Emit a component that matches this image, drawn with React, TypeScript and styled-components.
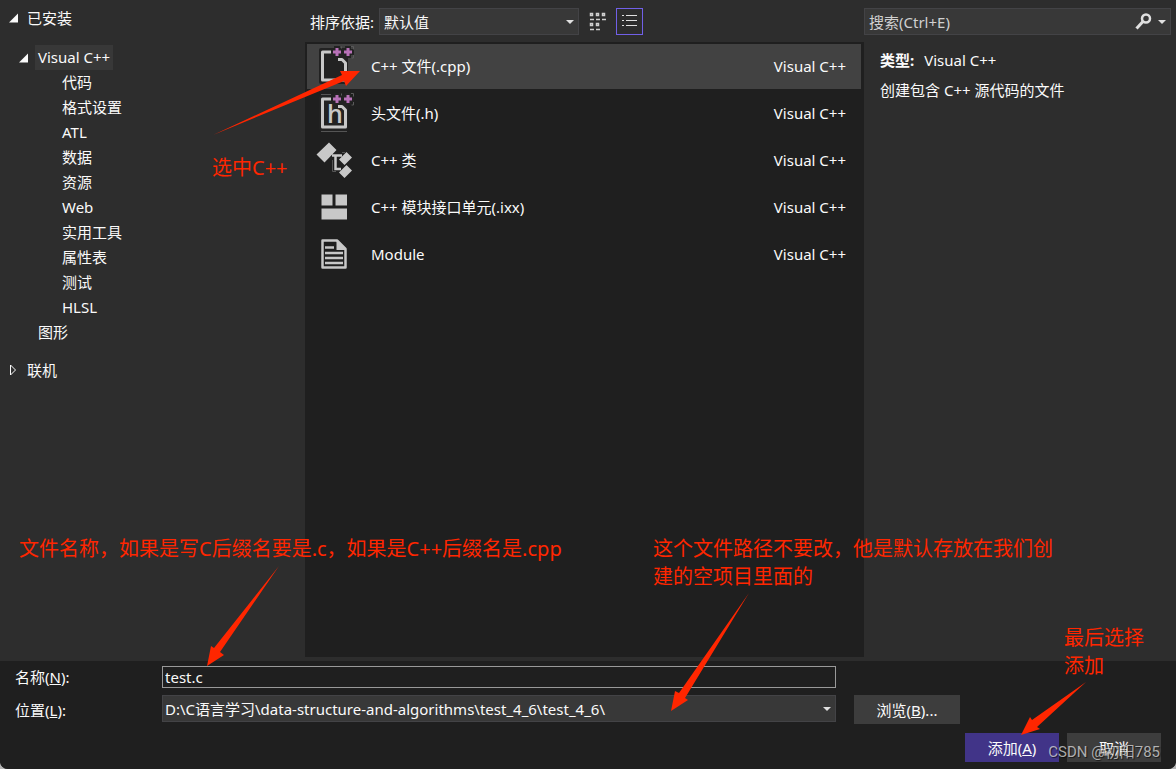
import React, { useState } from "react";
import styled, { createGlobalStyle, css } from "styled-components";

const sans = `"Noto Sans", "Noto Sans CJK SC", sans-serif`;

const GlobalStyle = createGlobalStyle`
  * { box-sizing: border-box; }
  body { margin: 0; background: #b4b4b4; }
  button, input, select { font: inherit; color: inherit; }
`;

const Dialog = styled.form`
  position: relative;
  display: flex;
  flex-direction: column;
  min-height: 100vh;
  overflow: hidden;
  border-radius: 0 0 8px 8px;
  background: #2d2d2d;
  color: #fafafa;
  font: 15px/24px ${sans};
`;

const Main = styled.div`
  flex: 1;
  display: grid;
  grid-template-columns: 305px minmax(0, 1fr) 312px;
`;

const Sidebar = styled.nav`
  padding: 5px 8px;
`;

const TreeHeading = styled.div`
  display: flex;
  align-items: center;
  gap: 8px;
  height: 25px;
`;

const TreeList = styled.ul`
  list-style: none;
  margin: 0;
  padding: 0;
`;

const Branch = styled(TreeList)`
  padding: 15px 0 12px 10px;
`;

const TreeRow = styled.li<{ $indent?: number }>`
  display: flex;
  align-items: center;
  gap: 6px;
  height: 25px;
  padding-left: ${(p) => p.$indent ?? 0}px;
`;

const TreeLabel = styled.span<{ $selected?: boolean }>`
  line-height: 25px;
  ${(p) =>
    p.$selected &&
    css`
      padding: 0 3px;
      background: #383838;
    `}
`;

const Center = styled.section`
  display: flex;
  flex-direction: column;
  padding-bottom: 4px;
`;

const Toolbar = styled.div`
  display: flex;
  align-items: center;
  height: 42px;
  padding: 1px 0 0 5px;
`;

const ToolbarLabel = styled.label`
  width: 69px;
  white-space: nowrap;
`;

const SelectBox = styled.div<{ $width?: string }>`
  position: relative;
  width: ${(p) => p.$width ?? "100%"};
  height: 27px;
`;

const Select = styled.select`
  appearance: none;
  display: block;
  width: 100%;
  height: 27px;
  padding: 0 20px 0 4px;
  border: 1px solid #434346;
  border-radius: 0;
  background: #383838;
  outline: none;
`;

const Location = styled(Select)`
  padding-left: 2px;
`;

const SelectArrow = styled.svg`
  position: absolute;
  right: 5px;
  top: 12px;
  pointer-events: none;
`;

const IconButton = styled.button<{ $active?: boolean }>`
  display: grid;
  place-items: center;
  width: 27px;
  height: 27px;
  margin-left: 5px;
  padding: 0;
  border: 1px solid ${(p) => (p.$active ? "#7160e8" : "transparent")};
  background: transparent;
`;

const TemplateList = styled.div`
  flex: 1;
  display: flex;
  flex-direction: column;
  gap: 2px;
  padding: 2px 3px 2px 2px;
  background: #1f1f1f;
`;

const Template = styled.button<{ $selected: boolean }>`
  display: flex;
  align-items: flex-start;
  height: 45px;
  padding: 0 15px 0 9px;
  border: 0;
  text-align: left;
  line-height: 44px;
  background: ${(p) => (p.$selected ? "#424242" : "transparent")};
`;

const TemplateName = styled.span`
  flex: 1;
  padding-left: 15px;
`;

const Details = styled.aside`
  padding-right: 5px;
`;

const SearchBox = styled.div`
  display: flex;
  align-items: center;
  gap: 6px;
  height: 27px;
  margin: 8px 0 13px;
  padding: 0 4px;
  border: 1px solid #434346;
  background: #383838;
`;

const SearchInput = styled.input`
  flex: 1;
  min-width: 0;
  padding: 0;
  border: 0;
  outline: none;
  background: transparent;
  &::placeholder { color: #d0d0d0; opacity: 1; }
`;

const DetailText = styled.p`
  margin: 0 0 6px;
  padding-left: 16px;
`;

const DetailKey = styled.strong`
  margin-right: 10px;
`;

const Footer = styled.footer`
  background: #1f1f1f;
  padding: 5px 15px 7px;
`;

const Fields = styled.div`
  display: grid;
  grid-template-columns: 147px minmax(0, 1fr) 106px;
  grid-template-rows: 22px 29px;
  row-gap: 7px;
  padding-right: 201px;
`;

const FieldLabel = styled.label`
  align-self: center;
`;

const NameInput = styled.input`
  height: 22px;
  padding: 0 2px;
  border: 1px solid #999;
  border-radius: 0;
  outline: none;
  background: #1f1f1f;
`;

const PushButton = styled.button<{ $primary?: boolean }>`
  height: 29px;
  min-width: 94px;
  padding: 0;
  border: 1px solid ${(p) => (p.$primary ? "#413488" : "#3d3d3d")};
  background: ${(p) => (p.$primary ? "#413488" : "#3d3d3d")};
`;

const BrowseButton = styled(PushButton)`
  grid-column: 3;
`;

const LocationCell = styled.div`
  padding-right: 18px;
`;

const NameCell = styled(LocationCell)`
  display: grid;
`;

const Actions = styled.div`
  display: flex;
  justify-content: flex-end;
  gap: 8px;
  margin-top: 9px;
`;

const Overlay = styled.div`
  position: absolute;
  inset: 0;
  pointer-events: none;
`;

const Arrows = styled.svg`
  position: absolute;
  left: 0;
  top: 0;
`;

const Note = styled.div<{ $x: number; $y: number }>`
  position: absolute;
  left: ${(p) => p.$x}px;
  top: ${(p) => p.$y}px;
  color: #ff2600;
  font-size: 20px;
  line-height: 28px;
  white-space: nowrap;
`;

const Watermark = styled.div`
  position: absolute;
  right: 16px;
  bottom: 7px;
  color: rgba(220, 220, 220, 0.75);
  font: 15px/20px Roboto, "Noto Sans CJK SC", sans-serif;
  text-shadow: 1px 1px 1px rgba(0, 0, 0, 0.6);
`;

const Expanded = () => (
  <svg width="11" height="10" viewBox="0 0 11 10">
    <path d="M10 0.5V9.5H1z" fill="#fafafa" />
  </svg>
);

const Collapsed = () => (
  <svg width="11" height="12" viewBox="0 0 11 12">
    <path d="M2.5 1V11L7.5 6z" fill="none" stroke="#fafafa" />
  </svg>
);

const Down = () => <path d="M0 0H8L4 4z" fill="#e0e0e0" />;

const PlusPlus = () => (
  <>
    <path d="M15 8h12M26 8h12M21 2v12M32 2v12" stroke="#222" strokeWidth="6" />
    <path d="M17 8h8M28 8h8M21 4v8M32 4v8" stroke="#b871b8" strokeWidth="3" />
    <path d="M25.500 2.500v2M35 2.500h2.500v3M37.500 11v3h-2" fill="none" stroke="#5a5a5a" />
  </>
);

const FileFrame = () => (
  <>
    <rect x="3" y="4" width="29" height="36" rx="2" fill="#222" />
    <path d="M16 8H6.500V36H29.500V19L26 15.500H22" fill="none" stroke="#c8c8c8" strokeWidth="3" strokeLinejoin="round" />
    <PlusPlus />
  </>
);

const icons: Record<string, React.ReactNode> = {
  cpp: <FileFrame />,
  header: (
    <>
      <path d="M5 40.500H31M5 3.500H15" stroke="#555" />
      <FileFrame />
      <text x="11" y="32" fontSize="25" fontWeight="600" fontFamily="Open Sans, sans-serif" fill="#c8c8c8">h</text>
    </>
  ),
  klass: (
    <>
      <path d="M16 17.500H26M19.500 17V31H25" fill="none" stroke="#c8c8c8" strokeWidth="2.500" />
      <path d="M16.500 22V33.500H20M26 14.500h3" fill="none" stroke="#555" />
      <path d="M13 4.500L20.500 12L8.500 24.500L0.500 16.500z M30.500 14L36 19.500L28.500 27L23 21.500z M30.500 27L36 32.500L28.500 40L23 34.500z" fill="#c8c8c8" />
    </>
  ),
  ixx: <path d="M5.500 9.500h11v11h-11zM19.500 9.500h11.500v11h-11.500zM5.500 23.500h25.500v11h-25.500z" fill="#c8c8c8" />,
  module: (
    <>
      <path d="M6.500 8.500H21L29.500 17V35.500H6.500z" fill="#1f1f1f" stroke="#c8c8c8" strokeWidth="2.500" strokeLinejoin="round" />
      <path d="M20.500 8V18H30z" fill="#c8c8c8" />
      <path d="M9 15.500h9M9 21h18M9 26h18M9 31h18" stroke="#c8c8c8" strokeWidth="2.500" />
    </>
  ),
};

const templates = [
  { icon: "cpp", name: "C++ 文件(.cpp)" },
  { icon: "header", name: "头文件(.h)" },
  { icon: "klass", name: "C++ 类" },
  { icon: "ixx", name: "C++ 模块接口单元(.ixx)" },
  { icon: "module", name: "Module" },
];

const categories = ["代码", "格式设置", "ATL", "数据", "资源", "Web", "实用工具", "属性表", "测试", "HLSL"];

export default function App() {
  const [selected, setSelected] = useState(0);

  return (
    <Dialog onSubmit={(e) => e.preventDefault()}>
      <GlobalStyle />
      <Main>
        <Sidebar>
          <TreeHeading>
            <Expanded />
            已安装
          </TreeHeading>
          <Branch>
            <TreeRow>
              <Expanded />
              <TreeLabel $selected>Visual C++</TreeLabel>
            </TreeRow>
            {categories.map((c) => (
              <TreeRow key={c} $indent={44}>
                <TreeLabel>{c}</TreeLabel>
              </TreeRow>
            ))}
            <TreeRow $indent={20}>
              <TreeLabel>图形</TreeLabel>
            </TreeRow>
          </Branch>
          <TreeHeading>
            <Collapsed />
            联机
          </TreeHeading>
        </Sidebar>

        <Center>
          <Toolbar>
            <ToolbarLabel htmlFor="sort">排序依据:</ToolbarLabel>
            <SelectBox $width="200px">
              <Select id="sort">
                <option>默认值</option>
              </Select>
              <SelectArrow width="8" height="5">
                <Down />
              </SelectArrow>
            </SelectBox>
            <IconButton type="button" aria-label="中等图标">
              <svg width="18" height="20" viewBox="0 0 18 20">
                <g fill="none" stroke="#d0d0d0" strokeWidth="1.500">
                  <path d="M1.500 1.500h2v2h-2zM7.500 1.500h2v2h-2zM13.500 1.500h2v2h-2zM1.500 11.500h2v2h-2zM7.500 11.500h2v2h-2z" />
                  <path d="M1 7.500h4M7 7.500h4M13 7.500h4M1 17.500h4M7 17.500h4" />
                </g>
              </svg>
            </IconButton>
            <IconButton type="button" aria-label="小图标" $active>
              <svg width="15" height="15" viewBox="0 0 15 15">
                <path d="M4 1.500h11M4 6.500h11M4 11.500h11M0 1.500h2M0 6.500h2M0 11.500h2" stroke="#e0e0e0" />
              </svg>
            </IconButton>
          </Toolbar>
          <TemplateList>
            {templates.map((t, i) => (
              <Template key={t.name} type="button" $selected={i === selected} onClick={() => setSelected(i)}>
                <svg width="40" height="45" viewBox="0 0 40 45">
                  {icons[t.icon]}
                </svg>
                <TemplateName>{t.name}</TemplateName>
                <span>Visual C++</span>
              </Template>
            ))}
          </TemplateList>
        </Center>

        <Details>
          <SearchBox>
            <SearchInput type="text" aria-label="搜索" placeholder="搜索(Ctrl+E)" />
            <svg width="17" height="17" viewBox="0 0 17 17">
              <circle cx="11" cy="5.500" r="4" fill="none" stroke="#e0e0e0" strokeWidth="2.500" />
              <path d="M8 8.500L1.500 15.500" stroke="#e0e0e0" strokeWidth="3" />
            </svg>
            <svg width="8" height="4">
              <Down />
            </svg>
          </SearchBox>
          <DetailText>
            <DetailKey>类型:</DetailKey>Visual C++
          </DetailText>
          <DetailText>创建包含 C++ 源代码的文件</DetailText>
        </Details>
      </Main>

      <Footer>
        <Fields>
          <FieldLabel htmlFor="name">
            名称(<u>N</u>):
          </FieldLabel>
          <NameCell>
            <NameInput id="name" type="text" defaultValue="test.c" />
          </NameCell>
          <span />
          <FieldLabel htmlFor="location">
            位置(<u>L</u>):
          </FieldLabel>
          <LocationCell>
            <SelectBox>
              <Location id="location">
                <option>D:\C语言学习\data-structure-and-algorithms\test_4_6\test_4_6\</option>
              </Location>
              <SelectArrow width="8" height="5">
                <Down />
              </SelectArrow>
            </SelectBox>
          </LocationCell>
          <BrowseButton type="button">
            浏览(<u>B</u>)...
          </BrowseButton>
        </Fields>
        <Actions>
          <PushButton type="submit" $primary>
            添加(<u>A</u>)
          </PushButton>
          <PushButton type="button">取消</PushButton>
        </Actions>
      </Footer>

      <Overlay>
        <Arrows width="1176" height="769" viewBox="0 0 1176 769" fill="#ff2600">
          <path d="M213 135L342 75L340 71H360L346 86L344 81z" />
          <path d="M279 566L214 648L211 646L207 666L224 655L220 652z" />
          <path d="M749 593L679 693L675 691L671 711L688 700L685 698z" />
          <path d="M1086 682L1032 720L1030 717L1021 735L1040 729L1037 727z" />
        </Arrows>
        <Note $x={212} $y={154}>选中C++</Note>
        <Note $x={19} $y={535}>文件名称，如果是写C后缀名要是.c，如果是C++后缀名是.cpp</Note>
        <Note $x={653} $y={535}>
          这个文件路径不要改，他是默认存放在我们创
          <br />
          建的空项目里面的
        </Note>
        <Note $x={1064} $y={624}>
          最后选择
          <br />
          添加
        </Note>
        <Watermark>CSDN @初阳785</Watermark>
      </Overlay>
    </Dialog>
  );
}
